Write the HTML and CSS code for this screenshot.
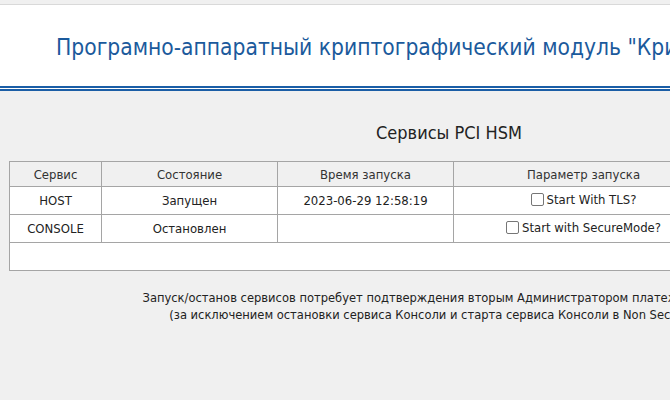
FILE: index.html
```html
<!DOCTYPE html>
<html lang="ru">
<head>
<meta charset="utf-8">
<title>Сервисы PCI HSM</title>
<link rel="stylesheet" href="styles.css">
</head>
<body>
<div class="page">
  <header class="header">
    <h1 class="brand">Програмно-аппаратный криптографический модуль "Криптон HSM"</h1>
  </header>
  <main class="main">
    <h2 class="section-title">Сервисы PCI HSM</h2>
    <table class="services">
      <colgroup>
        <col class="c1"><col class="c2"><col class="c3"><col class="c4"><col class="c5">
      </colgroup>
      <thead>
        <tr><th>Сервис</th><th>Состояние</th><th>Время запуска</th><th>Параметр запуска</th><th>Действие</th></tr>
      </thead>
      <tbody>
        <tr>
          <td>HOST</td><td>Запущен</td><td>2023-06-29 12:58:19</td>
          <td><label class="opt"><span class="box"></span>Start With TLS?</label></td>
          <td></td>
        </tr>
        <tr>
          <td>CONSOLE</td><td>Остановлен</td><td></td>
          <td><label class="opt"><span class="box"></span>Start with SecureMode?</label></td>
          <td></td>
        </tr>
        <tr class="empty"><td colspan="5"></td></tr>
      </tbody>
    </table>
    <p class="note">Запуск/останов сервисов потребует подтверждения вторым Администратором платежной системы<br>(за исключением остановки сервиса Консоли и старта сервиса Консоли в Non Secure Mode)</p>
  </main>
</div>
</body>
</html>
```
FILE: styles.css
```css
html, body {
  margin: 0;
  padding: 0;
  overflow: hidden;
  background: #f0f0f0;
}
.page {
  width: 900px;
  font-family: "DejaVu Sans Condensed", "DejaVu Sans", sans-serif;
  font-stretch: condensed;
  color: #222;
}
.header {
  background: #fff;
  margin-top: 4px;
  border-top: 1px solid #d9d9d9;
  height: 81px;
  border-bottom: 5px double #1b5ea6;
  display: flex;
  align-items: center;
  padding-left: 56px;
}
.brand {
  margin: 0;
  padding-top: 2px;
  font-size: 22.6px;
  font-weight: normal;
  color: #1b5a9c;
  white-space: nowrap;
}
.main {
  padding: 0 11px 0 9px;
}
.section-title {
  margin: 0;
  padding-top: 30px;
  height: 70px;
  box-sizing: border-box;
  text-align: center;
  font-size: 18px;
  font-weight: normal;
  color: #222;
  line-height: 24px;
}
.services {
  width: 880px;
  border-collapse: collapse;
  border: 1px solid #8a8a8a;
  font-size: 13px;
  table-layout: fixed;
}
.c1 { width: 92px; }
.c2 { width: 176px; }
.c3 { width: 176px; }
.c4 { width: 260px; }
.c5 { width: 176px; }
.services th, .services td {
  border: 1px solid #a5a5a5;
  height: 27px;
  padding: 0;
  text-align: center;
  font-weight: normal;
  white-space: nowrap;
}
.services th {
  background: #f0f0f0;
  color: #333;
  height: 24px;
}
.services td {
  background: #fff;
}
.opt {
  display: inline-flex;
  align-items: center;
  gap: 3px;
}
.box {
  width: 11px;
  height: 11px;
  border: 1px solid #767676;
  border-radius: 2px;
  background: #fff;
  display: inline-block;
}
.note {
  margin: 18px 0 0;
  text-align: center;
  font-size: 12.8px;
  line-height: 17px;
  color: #222;
}
```
